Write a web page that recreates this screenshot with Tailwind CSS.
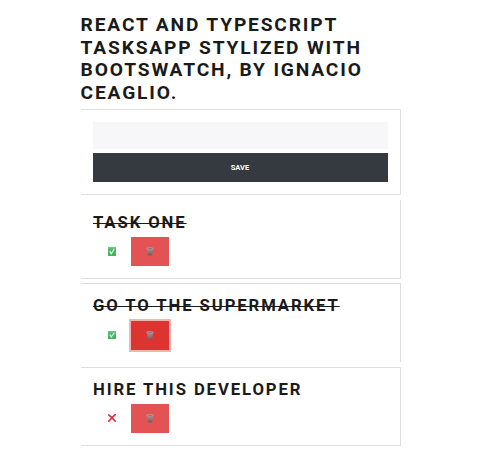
<!DOCTYPE html>
<html lang="en"><head><meta charset="utf-8"><title>Tasks</title>
<script src="https://cdn.jsdelivr.net/npm/@tailwindcss/browser@4"></script></head>
<body class="bg-white text-[#1a1a1a] font-['Roboto',sans-serif] overflow-hidden">
<svg class="absolute size-0" aria-hidden="true">
<defs>
<linearGradient id="green" x2="0" y2="1"><stop stop-color="#74c88b"/><stop offset=".35" stop-color="#4fb56b"/><stop offset="1" stop-color="#3fb35d"/></linearGradient>
<linearGradient id="metal" x2="0" y2="1"><stop stop-color="#b08d90"/><stop offset=".6" stop-color="#8e7175"/><stop offset="1" stop-color="#5f5f67"/></linearGradient>
</defs>
<symbol id="check" viewBox="0 0 8 9" preserveAspectRatio="none"><rect width="8" height="9" fill="url(#green)"/><path d="M1.8 4 3.2 6.8 6.3 2" fill="none" stroke="#e2f6e6" stroke-width="1.1"/></symbol>
<symbol id="cross" viewBox="0 0 8 8"><path d="M.7.9Q4 3.4 7.3 7.3M7.2.6Q4 3.4.7 7.3" fill="none" stroke="#e5303a" stroke-width="1.7" stroke-linecap="round"/></symbol>
<symbol id="bin" viewBox="0 0 8 9"><path d="M.7 1.3 1.9 8Q4 9.2 6.1 8L7.3 1.3Z" fill="url(#metal)"/><ellipse cx="4" cy="1.3" rx="3.6" ry="1" fill="#b79a9d"/><ellipse cx="4" cy="1.4" rx="2.6" ry=".5" fill="#917478"/></symbol>
</svg>
<main class="ml-[81px] w-[320px] pt-[13.7px]">
<h1 class="h-[91px] -ml-[0.4px] text-[19.2px] leading-[22.85px] font-bold tracking-[1.83px] whitespace-nowrap">REACT AND TYPESCRIPT<br>TASKSAPP STYLIZED WITH<br>BOOTSWATCH, BY IGNACIO<br>CEAGLIO.</h1>
<form class="mt-[4.3px] h-[86px] border border-l-0 border-[#dedede] pt-3 pl-3 pr-3">
<input aria-label="Task" class="block w-full h-[27px] bg-[#f7f7f9] outline-none">
<button type="button" class="mt-1 block w-full h-[29px] pr-px bg-[#343a40] text-white text-[7.5px] font-bold">SAVE</button>
</form>
<section class="mt-[5px] h-[79px] border-r border-b border-[#dedede] pt-[13px] pl-3">
<h2 class="h-[24px] leading-[20px] text-[16.7px] font-bold tracking-[1.9px] whitespace-nowrap"><span class="line-through decoration-1">TASK ONE</span></h2>
<div class="flex"><button class="w-[38px] h-[29px] flex items-center justify-center"><svg class="w-2 h-[9px]"><use href="#check"/></svg></button><button class="w-[38px] h-[29px] bg-[#e35353] flex items-center justify-center"><svg class="w-2 h-[9px]"><use href="#bin"/></svg></button></div>
</section>
<section class="mt-1 h-[79px] border-t border-r border-[#dedede] pt-[12px] pl-3">
<h2 class="h-[25px] leading-[20px] pt-[0.5px] text-[16.7px] font-bold tracking-[1.9px] whitespace-nowrap"><span class="line-through decoration-1">GO TO THE SUPERMARKET</span></h2>
<div class="flex"><button class="w-[38px] h-[29px] pb-px flex items-center justify-center"><svg class="size-2"><use href="#check"/></svg></button><button class="w-[38px] h-[29px] bg-[#dc3431] ring-2 ring-[#f4b4b3] flex items-center justify-center"><svg class="w-2 h-[9px]"><use href="#bin"/></svg></button></div>
</section>
<section class="mt-[5px] h-[79px] border border-l-0 border-[#dedede] pt-3 pl-3">
<h2 class="h-[24px] leading-[20px] text-[16.7px] font-bold tracking-[1.9px] whitespace-nowrap">HIRE THIS DEVELOPER</h2>
<div class="flex"><button class="w-[38px] h-[29px] flex items-center justify-center"><svg class="size-2"><use href="#cross"/></svg></button><button class="w-[38px] h-[29px] bg-[#e35353] flex items-center justify-center"><svg class="w-2 h-[9px]"><use href="#bin"/></svg></button></div>
</section>
</main></body></html>
